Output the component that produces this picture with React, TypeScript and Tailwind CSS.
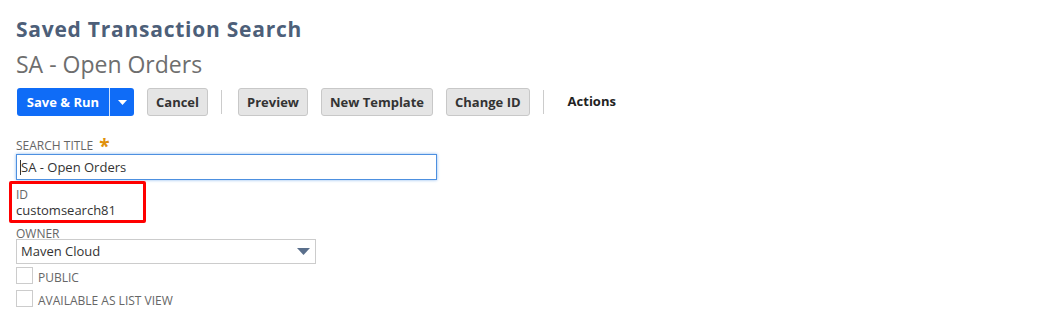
import React from "react";

const font = { fontFamily: '"Open Sans", "Noto Sans", sans-serif' };

function Btn({ children }: { children: React.ReactNode }) {
  return (
    <button className="h-[28px] px-[8px] rounded-[3px] border border-[#c8c8c8] bg-[#e5e5e5] text-[13px] font-bold text-[#333333] leading-none">
      {children}
    </button>
  );
}

function Sep() {
  return <div className="w-px h-[24px] bg-[#cccccc] mx-[13px]" />;
}

export default function App() {
  return (
    <div className="w-[1047px] h-[319px] bg-white overflow-hidden" style={font}>
      <div className="pl-[16px] pt-[16px]">
        <h1 className="text-[21px] tracking-[0.75px] font-bold text-[#4d5f79] leading-[27px]">Saved Transaction Search</h1>
        <h2 className="text-[23px] text-[#6e6e6e] leading-[30px] mt-[6px]">SA - Open Orders</h2>
        <div className="flex items-center mt-[9px]">
          <div className="flex h-[28px] rounded-[3px] bg-[#0f6cf7] ml-px">
            <button className="h-full w-[92px] text-[13px] font-bold text-white leading-none">Save &amp; Run</button>
            <div className="w-px bg-white/80" />
            <button className="h-full w-[24px] flex items-center justify-center">
              <svg width="9" height="5" viewBox="0 0 9 5"><path d="M0 0h9L4.5 5z" fill="#fff" /></svg>
            </button>
          </div>
          <div className="ml-[13px]"><Btn>Cancel</Btn></div>
          <Sep />
          <div className="ml-[3px] flex gap-[13px]">
            <Btn>Preview</Btn>
            <Btn>New Template</Btn>
            <Btn>Change ID</Btn>
          </div>
          <Sep />
          <span className="ml-[11px] text-[13px] font-bold text-[#222222]">Actions</span>
        </div>

        <div className="mt-[23px] flex items-start h-[15px]">
          <span className="text-[12px] text-[#666666] leading-[12px] mt-[1px]">SEARCH TITLE</span>
          <span className="ml-[6px] text-[19px] font-bold text-[#e0900a] leading-[14px] h-[13px]">*</span>
        </div>
        <div className="w-[421px] h-[26px] border border-[#4d90e0] shadow-[0_0_3px_#8ab8ee] flex items-center pl-[3px] text-[13px] text-[#333333]">
          <span className="border-l border-[#333] leading-[15px]">SA - Open Orders</span>
        </div>

        <div className="-ml-[7px] mt-[1px] w-[137px] h-[42px] border-[3px] border-[#ff0000] rounded-[2px] pl-[4px] pt-[4px]">
          <div className="text-[12px] text-[#666666] leading-[14px]">ID</div>
          <div className="text-[13px] text-[#333333] leading-[16px]">customsearch81</div>
        </div>

        <div className="mt-[5px] text-[12px] text-[#666666] leading-[11px]">OWNER</div>
        <div className="w-[300px] h-[25px] border border-[#cccccc] flex items-center justify-between pl-[4px] pr-[5px] text-[13px] text-[#333333]">
          <span>Maven Cloud</span>
          <svg width="13" height="7" viewBox="0 0 13 7"><path d="M0 0h13L6.5 7z" fill="#5a6f8c" /></svg>
        </div>

        <div className="mt-[3px] flex items-end gap-[5px]">
          <div className="w-[17px] h-[17px] border border-[#cccccc]" />
          <span className="text-[12px] text-[#666666] leading-[12px]">PUBLIC</span>
        </div>
        <div className="mt-[6px] flex items-end gap-[5px]">
          <div className="w-[17px] h-[17px] border border-[#cccccc]" />
          <span className="text-[12px] text-[#666666] leading-[12px]">AVAILABLE AS LIST VIEW</span>
        </div>
      </div>
    </div>
  );
}
